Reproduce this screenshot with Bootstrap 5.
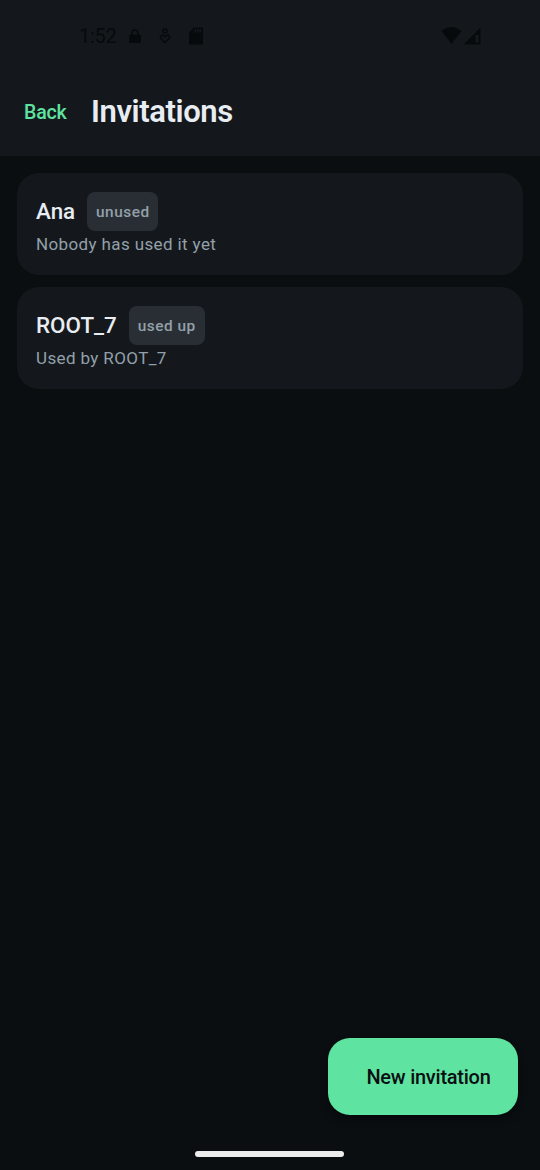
<!DOCTYPE html>
<html lang="en" data-bs-theme="dark">
<head>
<meta charset="utf-8">
<meta name="viewport" content="width=device-width, initial-scale=1">
<title>Invitations</title>
<link href="https://cdn.jsdelivr.net/npm/bootstrap@5.3.0/dist/css/bootstrap.min.css" rel="stylesheet">
<style>
  body { background: #0a0e11; color: #e8edf3; font-family: Roboto, sans-serif; height: 100vh; overflow: hidden; }
  .app-header { background: #14181c; height: 156px; flex: none; }
  .status-bar { height: 68px; padding: 4px 58px 0 79px; color: #070a0c; }
  .clock { font-size: 20px; line-height: 24px; width: 50px; letter-spacing: -.3px; }
  .title-row { height: 88px; }
  .back-link { font-size: 19.6px; font-weight: 500; line-height: 28px; color: #5fe3a1; letter-spacing: -.2px; width: 67px; padding-top: 2px; }
  .page-title { font-size: 31px; font-weight: 600; line-height: 38px; margin: 0; letter-spacing: -.4px; color: #e8edf3; }
  .invite-list { padding: 16.5px 17px 0 16.5px; gap: 11.5px; }
  .invite { --bs-card-bg: #14181c; --bs-card-border-width: 0; --bs-card-border-radius: 22px; height: 102.5px; padding: 19.3px 19.5px 0; }
  .invite-name { font-size: 22.4px; font-weight: 500; line-height: 33px; color: #e8edf3; }
  .invite-tag { background: #292e34; color: #93a0aa; font-size: 15.4px; font-weight: 500; line-height: 22px; letter-spacing: .52px; padding: 9px 8.8px 8px; border-radius: 8px; height: 39px; }
  .invite-note { color: #93a0aa; font-size: 17px; line-height: 22px; letter-spacing: .38px; margin-top: 2.6px; }
  .new-btn { --bs-btn-bg: #5fe3a1; --bs-btn-color: #0a0e11; --bs-btn-border-width: 0; width: 190px; height: 77px; border-radius: 22px; font-size: 20px; font-weight: 500; line-height: 28px; letter-spacing: -.25px; padding: 0 27px 0 38px; margin-right: 22px; box-shadow: 0 5px 9px rgba(0,0,0,.3); white-space: nowrap; }
  .home-bar { width: 149px; height: 6px; border-radius: 3px; background: #ececec; margin: 35.5px 0 13.5px 195px; flex: none; }
</style>
</head>
<body class="d-flex flex-column">
<header class="app-header">
  <div class="status-bar d-flex align-items-center">
    <span class="clock">1:52</span>
    <svg width="12" height="15" viewBox="0 0 12 15"><path d="M1.500 5.500H2.200V4a3.800 3.800 0 0 1 7.600 0v1.500h.7q1.500 0 1.500 1.500v5.500q0 1.500-1.500 1.500h-9Q0 14 0 12.500V7Q0 5.500 1.500 5.500zM3.700 5.500h4.600V4a2.300 2.300 0 0 0-4.600 0z" fill="currentColor"/></svg>
    <svg class="ms-3" width="16" height="16" viewBox="-2 0 16 16" fill="none" stroke="currentColor" stroke-width="1.500"><circle cx="6" cy="3" r="2"/><path d="M6 14.500 1.700 10.300C.2 8.600 2.800 6 4.700 7.800L6 9l1.300-1.200c1.900-1.800 4.500.8 3 2.500z"/></svg>
    <svg class="ms-3" width="14" height="18" viewBox="0 0 14 18"><path d="M5 .5h7.500q1.500 0 1.500 1.500v14q0 1.500-1.500 1.500h-11Q0 17.500 0 16V5.500zM5.500 2v3.500H7V2zm2.500 0v3.500h1.500V2zm2.500 0v3.500H12V2z" fill="currentColor" fill-rule="evenodd"/></svg>
    <svg class="ms-auto" width="41" height="18" viewBox="0 0 41 18" fill="currentColor"><path d="M10.500 17 .5 4Q10.500-4 20.500 4zM22.500 17.500 39.500.5v17zM34.500 8v7.500h3V8z" fill-rule="evenodd"/></svg>
  </div>
  <div class="title-row d-flex align-items-center ps-4">
    <a href="#" class="back-link text-decoration-none">Back</a>
    <h1 class="page-title">Invitations</h1>
  </div>
</header>
<main class="invite-list d-flex flex-column flex-grow-1">
  <article class="card invite">
    <div class="d-flex align-items-center gap-2">
      <span class="invite-name me-1">Ana</span><span class="invite-tag">unused</span>
    </div>
    <div class="invite-note">Nobody has used it yet</div>
  </article>
  <article class="card invite">
    <div class="d-flex align-items-center gap-2">
      <span class="invite-name me-1">ROOT_7</span><span class="invite-tag">used up</span>
    </div>
    <div class="invite-note">Used by ROOT_7</div>
  </article>
</main>
<button type="button" class="btn new-btn align-self-end flex-shrink-0">New invitation</button>
<div class="home-bar"></div>
<script src="https://cdn.jsdelivr.net/npm/bootstrap@5.3.0/dist/js/bootstrap.bundle.min.js"></script>
</body>
</html>
